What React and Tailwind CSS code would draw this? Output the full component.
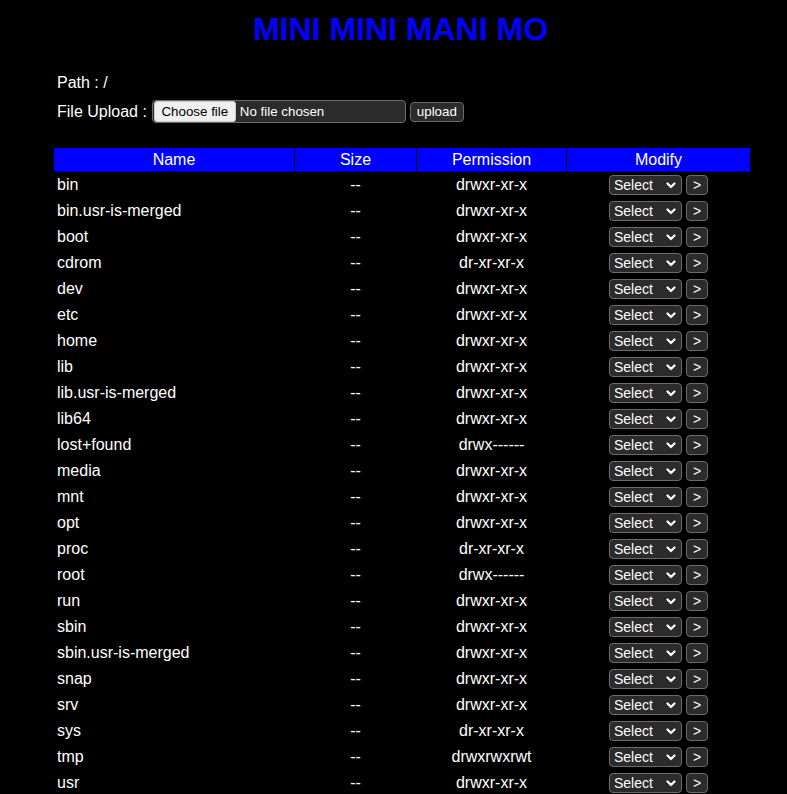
import React from "react";

const FILES = [
  ["bin", "drwxr-xr-x"],
  ["bin.usr-is-merged", "drwxr-xr-x"],
  ["boot", "drwxr-xr-x"],
  ["cdrom", "dr-xr-xr-x"],
  ["dev", "drwxr-xr-x"],
  ["etc", "drwxr-xr-x"],
  ["home", "drwxr-xr-x"],
  ["lib", "drwxr-xr-x"],
  ["lib.usr-is-merged", "drwxr-xr-x"],
  ["lib64", "drwxr-xr-x"],
  ["lost+found", "drwx------"],
  ["media", "drwxr-xr-x"],
  ["mnt", "drwxr-xr-x"],
  ["opt", "drwxr-xr-x"],
  ["proc", "dr-xr-xr-x"],
  ["root", "drwx------"],
  ["run", "drwxr-xr-x"],
  ["sbin", "drwxr-xr-x"],
  ["sbin.usr-is-merged", "drwxr-xr-x"],
  ["snap", "drwxr-xr-x"],
  ["srv", "drwxr-xr-x"],
  ["sys", "dr-xr-xr-x"],
  ["tmp", "drwxrwxrwt"],
  ["usr", "drwxr-xr-x"],
];

function Chevron() {
  return (
    <svg width="10" height="7" viewBox="0 0 10 7" className="shrink-0">
      <path d="M1.5 1.5 L5 5 L8.5 1.5" fill="none" stroke="white" strokeWidth="2.2" strokeLinecap="round" strokeLinejoin="round" />
    </svg>
  );
}

function Modify() {
  return (
    <div className="flex items-center justify-center gap-[4px] h-full">
      <div className="w-[73px] h-[20px] rounded-[4px] border border-[#6b6b6b] bg-[#2b2b2b] flex items-center justify-between pl-[4px] pr-[5px] text-[14px] text-white leading-none">
        <span>Select</span>
        <Chevron />
      </div>
      <div className="w-[22px] h-[20px] rounded-[4px] border border-[#6b6b6b] bg-[#2b2b2b] flex items-center justify-center text-[14px] text-white leading-none">
        &gt;
      </div>
    </div>
  );
}

export default function App() {
  return (
    <div
      className="bg-black text-white min-h-screen w-[787px] overflow-hidden"
      style={{ fontFamily: '"Liberation Sans", Arial, sans-serif' }}
    >
      <h1 className="pt-[11px] pl-[14px] text-center text-[32px] leading-[37px] font-bold text-[#0000ff]">
        MINI MINI MANI MO
      </h1>

      <div className="pl-[57px] mt-[26px] text-[16px] leading-[18px]">Path : /</div>

      <div className="pl-[57px] mt-[8px] flex items-center h-[23px] text-[16px]">
        <span>File Upload :</span>
        <div className="ml-[5px] w-[254px] h-[23px] rounded-[4px] border border-[#6b6b6b] bg-[#2b2b2b] flex items-center pl-px text-[13.33px] leading-none">
          <div className="h-[21px] w-[82px] rounded-[3px] bg-[#efefef] text-black border border-[#c8c8c8] flex items-center justify-center">
            Choose file
          </div>
          <span className="ml-[4px] text-white">No file chosen</span>
        </div>
        <div className="ml-[4px] w-[54px] h-[20px] rounded-[4px] border border-[#6b6b6b] bg-[#2b2b2b] flex items-center justify-center text-[13.33px] leading-none">
          upload
        </div>
      </div>

      <div className="ml-[54px] mt-[25px] w-[696px] grid grid-cols-[240px_121px_149px_183px] gap-x-px text-[16px]">
        {["Name", "Size", "Permission", "Modify"].map((h) => (
          <div key={h} className="bg-[#0000ff] h-[23px] mb-px flex items-center justify-center">
            {h}
          </div>
        ))}
        {FILES.map(([name, perm]) => (
          <React.Fragment key={name}>
            <div className="h-[26px] flex items-center pl-[3px]">{name}</div>
            <div className="h-[26px] flex items-center justify-center">--</div>
            <div className="h-[26px] flex items-center justify-center">{perm}</div>
            <div className="h-[26px]">
              <Modify />
            </div>
          </React.Fragment>
        ))}
      </div>
    </div>
  );
}
